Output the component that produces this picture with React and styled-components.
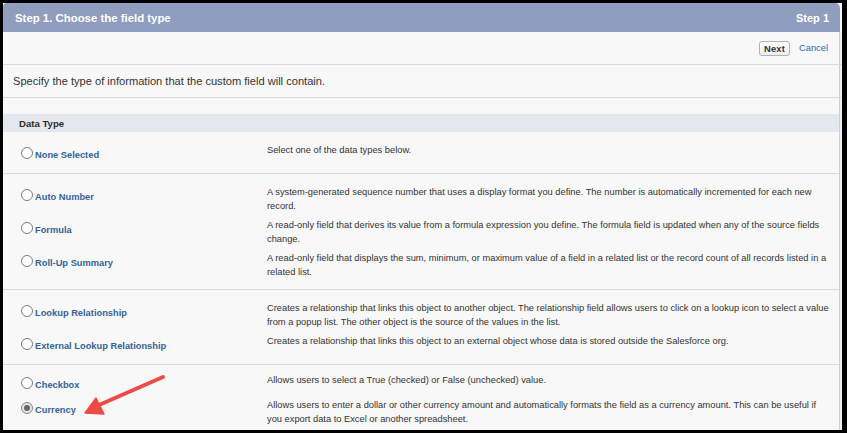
import React from 'react'
import styled, { createGlobalStyle } from 'styled-components'

const GlobalStyle = createGlobalStyle`
  html, body {
    margin: 0;
    padding: 0;
    background: #000;
  }
  body {
    font-family: "Liberation Sans", Arial, sans-serif;
  }
`

const groups = [
  [
    { name: 'None Selected', text: 'Select one of the data types below.' },
  ],
  [
    { name: 'Auto Number', text: 'A system-generated sequence number that uses a display format you define. The number is automatically incremented for each new record.' },
    { name: 'Formula', text: 'A read-only field that derives its value from a formula expression you define. The formula field is updated when any of the source fields change.' },
    { name: 'Roll-Up Summary', text: 'A read-only field that displays the sum, minimum, or maximum value of a field in a related list or the record count of all records listed in a related list.' },
  ],
  [
    { name: 'Lookup Relationship', text: 'Creates a relationship that links this object to another object. The relationship field allows users to click on a lookup icon to select a value from a popup list. The other object is the source of the values in the list.' },
    { name: 'External Lookup Relationship', text: 'Creates a relationship that links this object to an external object whose data is stored outside the Salesforce org.' },
  ],
  [
    { name: 'Checkbox', text: 'Allows users to select a True (checked) or False (unchecked) value.' },
    { name: 'Currency', text: 'Allows users to enter a dollar or other currency amount and automatically formats the field as a currency amount. This can be useful if you export data to Excel or another spreadsheet.', checked: true },
  ],
]

function App() {
  return (
    <>
      <GlobalStyle />
      <Page>
        <Panel>
          <Header>
            <Title>Step 1. Choose the field type</Title>
            <StepNo>Step 1</StepNo>
          </Header>
          <Body>
            <ButtonBar>
              <NextButton>Next</NextButton>
              <CancelLink>Cancel</CancelLink>
            </ButtonBar>
            <Intro>Specify the type of information that the custom field will contain.</Intro>
            <SectionHeader>Data Type</SectionHeader>
            {groups.map((rows, i) => (
              <Group key={i} $last={i === groups.length - 1}>
                {rows.map(({ name, text, checked }) => (
                  <Row key={name}>
                    <LabelCell>
                      <Radio $checked={checked} />
                      <TypeLabel>{name}</TypeLabel>
                    </LabelCell>
                    <Desc>{text}</Desc>
                  </Row>
                ))}
              </Group>
            ))}
          </Body>
        </Panel>
        <Arrow viewBox="0 0 847 433">
          <line x1="163" y1="377" x2="99" y2="405" stroke="#ee4b46" strokeWidth="4" strokeLinecap="round" />
          <polygon points="85,413 96,398 104,414" fill="#ee4b46" stroke="#ee4b46" strokeWidth="1.5" strokeLinejoin="round" />
        </Arrow>
      </Page>
    </>
  )
}

export default App

const Page = styled.div`
  position: relative;
  width: 847px;
  height: 433px;
  box-sizing: border-box;
  padding: 3px 5px 3px 3px;
  background: #000;
`

const Panel = styled.div`
  height: 100%;
  overflow: hidden;
  background: #f8f8f8;
  display: flex;
  flex-direction: column;
`

const Header = styled.div`
  flex: none;
  height: 29px;
  margin-right: 2px;
  padding: 0 11px 0 12px;
  display: flex;
  align-items: center;
  justify-content: space-between;
  background: #8f9dbe;
  border-radius: 4px 5px 0 0;
  color: #fff;
  font-weight: bold;
  font-size: 11.4px;
`

const Title = styled.div``

const StepNo = styled.div`
  font-size: 11px;
`

const Body = styled.div`
  flex: 1;
  box-shadow: inset -2px 0 0 #efefef, inset -3px 0 0 #cfcfcf;
`

const ButtonBar = styled.div`
  height: 32px;
  display: flex;
  align-items: center;
  justify-content: flex-end;
  padding-right: 14px;
  border-bottom: 1px solid #dadada;
`

const NextButton = styled.button`
  height: 15px;
  padding: 0 4px;
  margin-top: 1px;
  border: 1px solid #b3b3b3;
  border-radius: 3px;
  background: linear-gradient(#ffffff, #eeeeee);
  font-family: inherit;
  font-weight: bold;
  font-size: 9.4px;
  letter-spacing: 0.2px;
  color: #333;
  line-height: 13px;
`

const CancelLink = styled.a`
  margin-left: 9px;
  color: #1c6cb4;
  font-size: 9.3px;
`

const Intro = styled.div`
  height: 32px;
  padding-left: 10px;
  display: flex;
  align-items: center;
  border-bottom: 1px solid #dadada;
  font-size: 11.1px;
  color: #333;
`

const SectionHeader = styled.div`
  margin: 16px 3px 0 0;
  height: 18px;
  padding-left: 16px;
  display: flex;
  align-items: center;
  background: #e4e7ee;
  font-weight: bold;
  font-size: 9.6px;
  color: #2b2b2b;
`

const Group = styled.div`
  padding: ${p => (p.$last ? '8px' : '11px')} 0 10px;
  display: flex;
  flex-direction: column;
  gap: 5px;
  margin-right: 3px;
  border-bottom: ${p => (p.$last ? 'none' : '1px solid #dadada')};
`

const Row = styled.div`
  display: flex;
  align-items: flex-start;
`

const LabelCell = styled.div`
  width: 246px;
  min-height: 20px;
  padding-left: 18px;
  flex: none;
  display: flex;
  align-items: flex-start;
  gap: 2px;
`

const Radio = styled.span`
  flex: none;
  width: 12px;
  height: 12px;
  margin-top: 4px;
  box-sizing: border-box;
  border-radius: 50%;
  border: 1px solid ${p => (p.$checked ? '#8a8a8a' : '#7a7a7a')};
  background: ${p => (p.$checked ? '#e4e4e4' : '#fff')};
  display: flex;
  align-items: center;
  justify-content: center;

  &::after {
    content: '';
    display: ${p => (p.$checked ? 'block' : 'none')};
    width: 6px;
    height: 6px;
    border-radius: 50%;
    background: #666;
  }
`

const TypeLabel = styled.span`
  padding-top: 5px;
  line-height: 14px;
  font-weight: bold;
  font-size: 9.3px;
  color: #34639a;
`

const Desc = styled.div`
  flex: 1;
  padding-right: 10px;
  line-height: 14px;
  font-size: 9.3px;
  color: #333;
`

const Arrow = styled.svg`
  position: absolute;
  left: 0;
  top: 0;
  width: 847px;
  height: 433px;
  pointer-events: none;
`
